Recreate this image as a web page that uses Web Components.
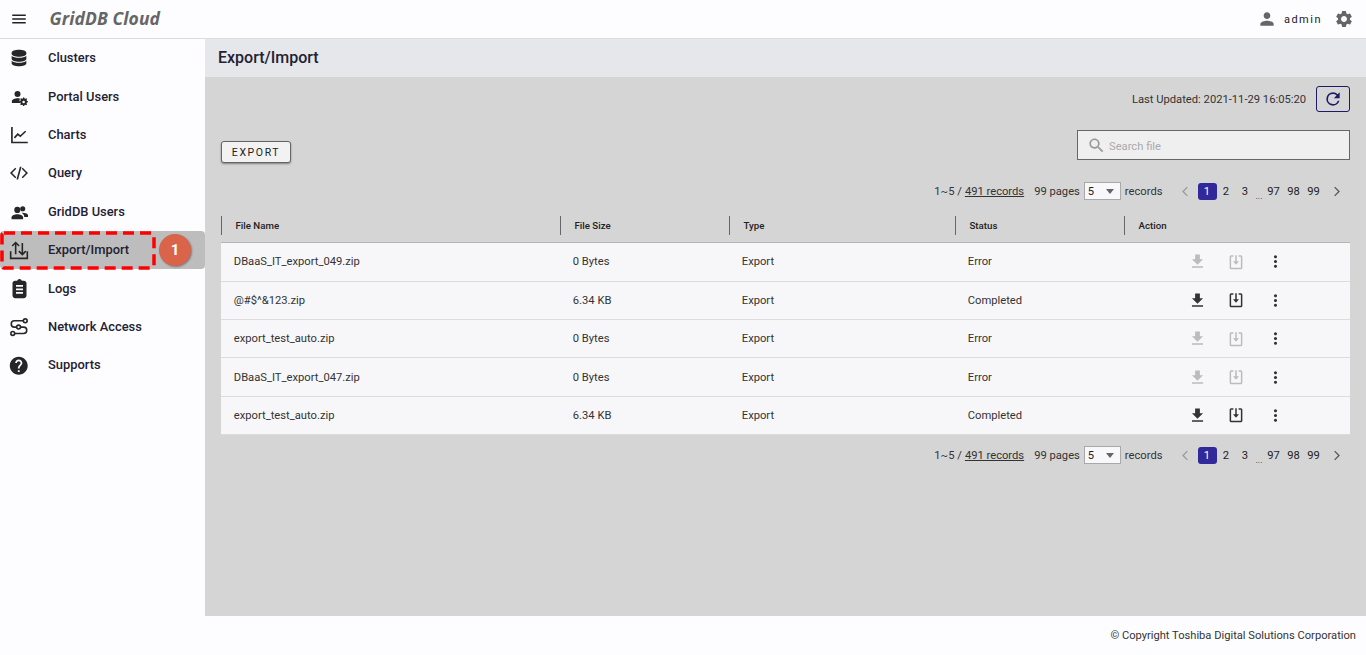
<!DOCTYPE html>
<html><head><meta charset="utf-8"><title>GridDB Cloud</title>
<style>
html,body{margin:0;padding:0;height:100%;overflow:hidden;font-family:Roboto,"Liberation Sans",sans-serif;color:#1f2233}
</style></head><body>
<griddb-app></griddb-app>
<script>
const P={
menu:'<path d="M3 18h18v-2H3v2zm0-5h18v-2H3v2zm0-7v2h18V6H3z"/>',
person:'<path d="M12 12c2.21 0 4-1.79 4-4s-1.79-4-4-4-4 1.79-4 4 1.79 4 4 4zm0 2c-2.67 0-8 1.34-8 4v2h16v-2c0-2.66-5.33-4-8-4z"/>',
gear:'<path d="M19.14 12.94c.04-.3.06-.61.06-.94 0-.32-.02-.64-.07-.94l2.03-1.58c.18-.14.23-.41.12-.61l-1.92-3.32c-.12-.22-.37-.29-.59-.22l-2.39.96c-.5-.38-1.03-.7-1.62-.94l-.36-2.54c-.04-.24-.24-.41-.48-.41h-3.84c-.24 0-.43.17-.47.41l-.36 2.54c-.59.24-1.13.57-1.62.94l-2.39-.96c-.22-.08-.47 0-.59.22L2.74 8.87c-.12.21-.08.47.12.61l2.03 1.58c-.05.3-.09.63-.09.94s.02.64.07.94l-2.03 1.58c-.18.14-.23.41-.12.61l1.92 3.32c.12.22.37.29.59.22l2.39-.96c.5.38 1.03.7 1.62.94l.36 2.54c.05.24.24.41.48.41h3.84c.24 0 .44-.17.47-.41l.36-2.54c.59-.24 1.13-.56 1.62-.94l2.39.96c.22.08.47 0 .59-.22l1.92-3.32c.12-.22.07-.47-.12-.61l-2.01-1.58zM12 15.6c-1.98 0-3.6-1.62-3.6-3.6s1.62-3.6 3.6-3.6 3.6 1.62 3.6 3.6-1.62 3.6-3.6 3.6z"/>',
search:'<path d="M15.5 14h-.79l-.28-.27C15.41 12.59 16 11.11 16 9.5 16 5.91 13.09 3 9.5 3S3 5.91 3 9.5 5.91 16 9.5 16c1.61 0 3.09-.59 4.23-1.57l.27.28v.79l5 4.99L20.49 19l-4.99-5zm-6 0C7.01 14 5 11.99 5 9.5S7.01 5 9.5 5 14 7.01 14 9.5 11.99 14 9.5 14z"/>',
refresh:'<path d="M17.65 6.35A7.96 7.96 0 0 0 12 4a8 8 0 1 0 7.75 10h-2.08A6 6 0 1 1 12 6c1.66 0 3.14.69 4.22 1.78L13 11h7V4l-2.35 2.35z"/>',
db:'<path d="M12 3c-4.4 0-8 1.3-8 3v1.6c0 1.7 3.6 3 8 3s8-1.3 8-3V6c0-1.700-3.600-3-8-3zM4 9.600V13c0 1.700 3.600 3 8 3s8-1.300 8-3V9.600c-1.500 1.500-4.700 2.200-8 2.200s-6.500-.7-8-2.200zM4 15v3c0 1.700 3.600 3 8 3s8-1.300 8-3v-3c-1.500 1.500-4.700 2.200-8 2.200S5.500 16.500 4 15z"/>',
portal:'<circle cx="10" cy="8" r="4"/><path d="M10 13.500c-3 0-7.500 1.400-7.500 4V20h11.200a6.600 6.600 0 0 1-.5-6.100c-1-.3-2.100-.4-3.200-.4z"/><path fill-rule="evenodd" d="M19 12.500l.3 1.400 1.100.5 1.300-.7 1.100 1.100-.7 1.300.5 1.100 1.400.3v1.600l-1.400.3-.5 1.100.7 1.300-1.100 1.100-1.300-.7-1.100.5-.3 1.400h-1.600l-.3-1.400-1.100-.5-1.300.7-1.100-1.100.7-1.300-.5-1.100-1.400-.3v-1.600l1.400-.3.500-1.100-.7-1.300 1.100-1.100 1.300.7 1.100-.5.300-1.400zM18.200 16.900a1.700 1.700 0 1 0 0 3.400 1.700 1.700 0 0 0 0-3.400z"/>',
chart:'<path fill="none" stroke="currentColor" stroke-width="2" d="M3.500 2.500V21h19"/><path fill="none" stroke="currentColor" stroke-width="2" d="M6.500 15.500l4-4.500 3 2.500 6.500-6"/>',
code:'<path d="M8.400 17.600L2.800 12l5.600-5.600L7 5l-7 7 7 7zM15.600 17.600l5.600-5.600-5.600-5.600L17 5l7 7-7 7z"/><path d="M13.200 3.500h2.200L10.800 20.500H8.600z"/>',
group:'<circle cx="9.500" cy="9" r="4"/><circle cx="16.500" cy="7.500" r="3.300"/><path d="M9.500 14.500c-3.200 0-7.500 1.500-7.500 4V21h15v-2.500c0-2.500-4.300-4-7.500-4z"/><path d="M16.500 12.500c-.5 0-1 0-1.600.1 2 1.100 3.600 3 3.600 5.400h5V16c0-2.300-4-3.500-7-3.500z"/>',
transfer:'<path fill="none" stroke="currentColor" stroke-width="1.900" d="M2 13.500V22h20v-8.500"/><path fill="none" stroke="currentColor" stroke-width="1.900" d="M8 17V3M3.800 7.200L8 3l4.200 4.200M16 3.500V17.500M11.800 13.300L16 17.500l4.200-4.200"/>',
logs:'<path fill-rule="evenodd" d="M7 3h2.400c.3-1.200 1.400-2 2.600-2s2.300.8 2.600 2H17c1.700 0 3 1.300 3 3v14c0 1.700-1.300 3-3 3H7c-1.700 0-3-1.300-3-3V6c0-1.700 1.300-3 3-3zM8 8v2h8V8zM8 12v2h8v-2zM8 16v2h8v-2z"/>',
net:'<g fill="none" stroke="currentColor" stroke-width="1.900"><path d="M17 4.500H6.500a3.800 3.800 0 0 0 0 7.600H17.500a3.800 3.800 0 0 1 0 7.600H7"/><circle cx="19.500" cy="4.500" r="2.300"/><circle cx="11.500" cy="12" r="2.300" fill="#fdfdff"/><circle cx="4.500" cy="19.700" r="2.300"/></g>',
help:'<path d="M12 2C6.480 2 2 6.480 2 12s4.480 10 10 10 10-4.480 10-10S17.520 2 12 2zm1 17h-2v-2h2v2zm2.070-7.750l-.9.920C13.450 12.900 13 13.500 13 15h-2v-.5c0-1.100.45-2.100 1.170-2.830l1.240-1.260c.37-.36.590-.86.590-1.410 0-1.100-.9-2-2-2s-2 .9-2 2H8c0-2.210 1.790-4 4-4s4 1.790 4 4c0 .88-.36 1.680-.93 2.250z"/>',
dl:'<path d="M19 9h-4V3H9v6H5l7 7 7-7zM5 18v2h14v-2H5z"/>',
imp:'<g fill="none" stroke="currentColor" stroke-width="2"><path d="M8.500 4H5.500a1 1 0 0 0-1 1v14.500a1 1 0 0 0 1 1h13a1 1 0 0 0 1-1V5a1 1 0 0 0-1-1h-3"/></g><path d="M11 3h2v8h3l-4 4.500L8 11h3z"/>',
more:'<path d="M12 8c1.100 0 2-.9 2-2s-.9-2-2-2-2 .9-2 2 .9 2 2 2zm0 2c-1.100 0-2 .9-2 2s.9 2 2 2 2-.9 2-2-.9-2-2-2zm0 6c-1.100 0-2 .9-2 2s.9 2 2 2 2-.9 2-2-.9-2-2-2z"/>',
left:'<path d="M15 5l-7 7 7 7" fill="none" stroke="currentColor" stroke-width="2"/>',
right:'<path d="M9 5l7 7-7 7" fill="none" stroke="currentColor" stroke-width="2"/>'
};
function def(name,css,html){
  customElements.define(name,class extends HTMLElement{
    connectedCallback(){
      if(this.shadowRoot)return;
      const r=this.attachShadow({mode:'open'});
      const a=n=>this.getAttribute(n)||'';
      r.innerHTML='<style>'+css+'</style>'+(typeof html==='function'?html(a,this):html);
    }
  });
}
def('ui-icon',':host{display:inline-flex;flex:none;width:var(--s,24px);height:var(--s,24px);color:inherit}svg{width:100%;height:100%;fill:currentColor;display:block}',
  a=>`<svg viewBox="0 0 24 24">${P[a('n')]}</svg>`);

def('top-bar',`:host{display:flex;align-items:center;height:38px;background:#fdfdff;border-bottom:1px solid #dcdce0;padding:0 12px 0 10px}
.logo{font:italic 700 17.500px "Open Sans",sans-serif;color:#666;margin-left:21.500px;letter-spacing:.1px;line-height:36px;padding-bottom:2px}
.sp{flex:1}.u{font-size:11px;letter-spacing:1.500px;color:#222;margin:0 12px 0 7px}
ui-icon{color:#222}`,
`<ui-icon n="menu" style="--s:18px"></ui-icon><span class="logo">GridDB Cloud</span><span class="sp"></span>
<ui-icon n="person" style="--s:20px;color:#666"></ui-icon><span class="u">admin</span><ui-icon n="gear" style="--s:20px;color:#666"></ui-icon>`);

def('nav-item',`:host{display:flex;align-items:center;height:38.400px;border-radius:4px;position:relative;font-size:12.900px;font-weight:500;color:#1f2233}
:host([active]){background:#bdbdbd}
.b{width:38px;display:flex;justify-content:center;flex:none;color:#262626}
span{margin-left:10px;position:relative;top:-.4px;white-space:nowrap}`,
a=>`<div class="b"><ui-icon n="${a('icon')}" style="--s:${a('size')||20}px"></ui-icon></div><span><slot></slot></span><slot name="over"></slot>`);

def('call-out',`:host{position:absolute;inset:0;pointer-events:none;display:block}
svg{position:absolute;left:0;top:0;width:156px;height:39px;fill:none}
.n{position:absolute;left:159px;top:3px;width:32px;height:32px;border-radius:50%;background:#d9644a;color:#fff;font:700 15px/32px Roboto,sans-serif;text-align:center;box-shadow:1px 1px 2px rgba(0,0,0,.35)}`,
`<svg viewBox="0 0 156 39"><rect x="2" y="2" width="152" height="35" rx="2" stroke="#f00" stroke-width="3.500" stroke-dasharray="11 6"/></svg><div class="n">1</div>`);

def('side-nav',`:host{display:block;width:205px;flex:none;background:#fdfdff}`,`<slot></slot>`);

def('pager-bar',`:host{display:flex;align-items:center;justify-content:flex-end;height:24px;font-size:11.200px;color:#333;padding-right:6px}
u{margin-left:3px}.pg{margin-left:10px}
.sel{box-sizing:border-box;width:37px;height:18px;margin:0 4px 0 4px;border:1px solid #a9a9a9;background:#f8f8fb;display:flex;align-items:center;padding-left:3px;justify-content:space-between;color:#222}
.sel i{width:0;height:0;border:4.500px solid transparent;border-top:5px solid #666;border-bottom:0;margin-right:6px}
ui-icon{--s:15px;color:#555}ui-icon.d{color:#999}
.nums{display:flex;align-items:center;margin:0 5.500px 0 5px}
.nums b{font-weight:400;width:19px;text-align:center;color:#222}
.nums b.on{width:19px;height:17px;line-height:17px;background:#31289a;border-radius:3px;color:#fff}
.dots{position:relative;top:5px;font-size:9px;width:11px;text-align:center;margin:0 -1px}
.nums b.w{width:20px}.rec{margin-right:15px}`,
`<span>1~5 /</span><u>491 records</u><span class="pg">99 pages</span><div class="sel">5<i></i></div><span class="rec">records</span>
<ui-icon class="d" n="left"></ui-icon><div class="nums"><b class="on">1</b><b>2</b><b>3</b><span class="dots">...</span><b class="w">97</b><b class="w">98</b><b class="w">99</b></div><ui-icon n="right"></ui-icon>`);

const cols='339px 169px 226px 169px 226px';
def('file-head',`:host{display:grid;grid-template-columns:${cols};height:28.200px;padding-bottom:6px;box-sizing:border-box;font-size:9.700px;font-weight:500;color:#222;border-bottom:1px solid #b5b5b5;align-items:center}
div{border-left:1px solid #666;height:19px;line-height:19px;padding-left:13.500px}`,
`<div>File Name</div><div>File Size</div><div>Type</div><div>Status</div><div>Action</div>`);

def('file-row',`:host{display:grid;grid-template-columns:${cols};height:38.400px;box-sizing:border-box;background:#f7f7fa;border-bottom:1px solid #dcdcdc;align-items:center;font-size:11.200px;color:#333}
div{padding-left:12.800px}
.act{display:grid;grid-template-columns:repeat(3,39px);justify-items:center;align-items:center;padding-left:53.500px;color:#333}
.act ui-icon.t{--s:19px}
.act ui-icon.i{--s:18px}
.act ui-icon.m{--s:19px;color:#333}
.act[off] .t{color:#bcbcbc}`,
a=>`<div>${a('name')}</div><div>${a('size')}</div><div>Export</div><div>${a('status')}</div>
<div class="act" ${a('status')==='Error'?'off':''}><ui-icon class="t" n="dl"></ui-icon><ui-icon class="t i" n="imp"></ui-icon><ui-icon class="m" n="more"></ui-icon></div>`);

def('export-page',`:host{display:flex;flex-direction:column;flex:1;min-width:0;background:#d5d5d5}
.title{height:38px;background:#e6e7eb;padding-left:13px;font-size:16px;font-weight:500;line-height:37px;color:#1f2233;flex:none}
.body{flex:1;padding:9px 16px 0;display:flex;flex-direction:column}
.upd{display:flex;justify-content:flex-end;align-items:center;height:26px;font-size:11.200px;color:#333}
.ref{box-sizing:border-box;width:34px;height:26px;margin-left:10px;border:1px solid #1c1a6b;border-radius:3px;display:flex;align-items:center;justify-content:center;color:#1c1a6b}
.ref ui-icon{--s:20px}
.tools{display:flex;justify-content:space-between;align-items:flex-start;height:49px;margin-top:18px}
.btn{box-sizing:border-box;margin-top:11px;width:70px;height:22px;border:1px solid #666;border-radius:3px;background:#f2f2f2;font-size:10.500px;font-weight:400;letter-spacing:1.600px;color:#222;display:flex;align-items:center;justify-content:center;box-shadow:0 1px 2px rgba(0,0,0,.4)}
.search{box-sizing:border-box;width:273px;height:30px;border:1px solid #666;background:#efefef;display:flex;align-items:center;padding-left:8.500px;color:#aaa;font-size:11.200px}
.search ui-icon{--s:19px;color:#999;margin-right:3.500px}
.search span{position:relative;top:1px}
file-head{margin-top:12px}`,
`<div class="title">Export/Import</div><div class="body">
<div class="upd">Last Updated: 2021-11-29 16:05:20<div class="ref"><ui-icon n="refresh"></ui-icon></div></div>
<div class="tools"><div class="btn">EXPORT</div><div class="search"><ui-icon n="search"></ui-icon><span>Search file</span></div></div>
<pager-bar></pager-bar>
<file-head></file-head>
<file-row name="DBaaS_IT_export_049.zip" size="0 Bytes" status="Error"></file-row>
<file-row name="@#$^&amp;123.zip" size="6.34 KB" status="Completed"></file-row>
<file-row name="export_test_auto.zip" size="0 Bytes" status="Error"></file-row>
<file-row name="DBaaS_IT_export_047.zip" size="0 Bytes" status="Error"></file-row>
<file-row name="export_test_auto.zip" size="6.34 KB" status="Completed"></file-row>
<pager-bar style="margin-top:8px"></pager-bar>
</div>`);

def('griddb-app',`:host{display:flex;flex-direction:column;height:655px}
.mid{display:flex;flex:1;min-height:0}
footer{height:39px;flex:none;background:#fdfdff;display:flex;align-items:center;justify-content:flex-end;padding-right:10px;font-size:11.150px;color:#333}`,
`<top-bar></top-bar><div class="mid"><side-nav>
<nav-item icon="db" size="22">Clusters</nav-item><nav-item icon="portal" size="18">Portal Users</nav-item><nav-item icon="chart">Charts</nav-item><nav-item icon="code" size="18">Query</nav-item><nav-item icon="group" size="18.500">GridDB Users</nav-item>
<nav-item icon="transfer" active>Export/Import<call-out slot="over"></call-out></nav-item>
<nav-item icon="logs" size="21">Logs</nav-item><nav-item icon="net">Network Access</nav-item><nav-item icon="help" size="21.500">Supports</nav-item>
</side-nav><export-page></export-page></div><footer>© Copyright Toshiba Digital Solutions Corporation</footer>`);
</script></body></html>
